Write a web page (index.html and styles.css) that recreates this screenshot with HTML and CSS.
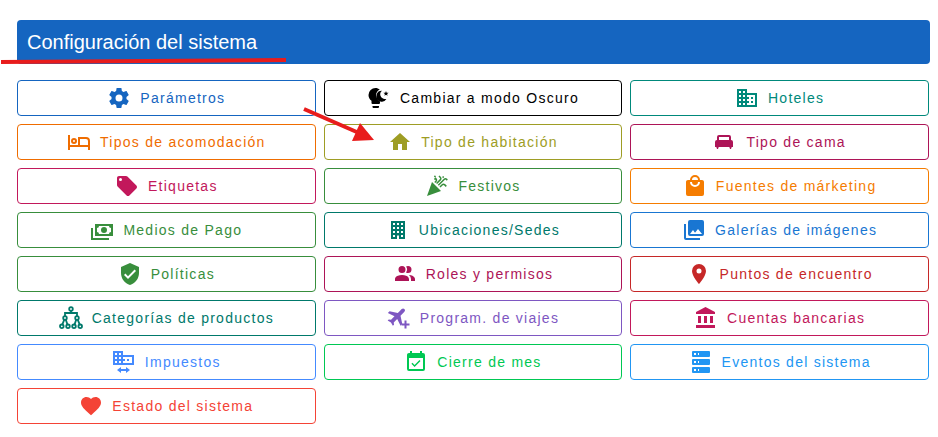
FILE: index.html
```html
<!DOCTYPE html>
<html lang="es">
<head>
    <meta charset="UTF-8">
    <meta name="viewport" content="width=device-width, initial-scale=1.0">
    <title>Configuración del sistema</title>
    <link rel="stylesheet" href="styles.css">
</head>
<body>
    <main class="settings">
        <header class="toolbar">
            <h1>Configuración del sistema</h1>
        </header>

        <div class="options">
            <button type="button" class="btn blue-dark">
                <svg class="icon" viewBox="0 0 24 24"><path d="M12,15.5A3.5,3.5 0 0,1 8.5,12A3.5,3.5 0 0,1 12,8.5A3.5,3.5 0 0,1 15.5,12A3.5,3.5 0 0,1 12,15.5M19.43,12.97C19.47,12.65 19.5,12.33 19.5,12C19.5,11.67 19.47,11.34 19.43,11L21.54,9.37C21.73,9.22 21.78,8.95 21.66,8.73L19.66,5.27C19.54,5.05 19.27,4.96 19.05,5.05L16.56,6.05C16.04,5.66 15.5,5.32 14.87,5.07L14.5,2.42C14.46,2.18 14.25,2 14,2H10C9.75,2 9.54,2.18 9.5,2.42L9.13,5.07C8.5,5.32 7.96,5.66 7.44,6.05L4.95,5.05C4.73,4.96 4.46,5.05 4.34,5.27L2.34,8.73C2.21,8.95 2.27,9.22 2.46,9.37L4.57,11C4.53,11.34 4.5,11.67 4.5,12C4.5,12.33 4.53,12.65 4.57,12.97L2.46,14.63C2.27,14.78 2.21,15.05 2.34,15.27L4.34,18.73C4.46,18.95 4.73,19.03 4.95,18.95L7.44,17.94C7.96,18.34 8.5,18.68 9.13,18.93L9.5,21.58C9.54,21.82 9.75,22 10,22H14C14.25,22 14.46,21.82 14.5,21.58L14.87,18.93C15.5,18.67 16.04,18.34 16.56,17.94L19.05,18.95C19.27,19.03 19.54,18.95 19.66,18.73L21.66,15.27C21.78,15.05 21.73,14.78 21.54,14.63L19.43,12.97Z"/></svg>
                <span>Parámetros</span>
            </button>
            <button type="button" class="btn black">
                <svg class="icon" viewBox="0 0 24 24"><path d="M8.5,2A7.2,7.2 0 0,0 1.5,9C1.5,11.4 2.7,13.5 4.5,14.7V17A1,1 0 0,0 5.5,18H12A1,1 0 0,0 13,17V15.6C10.4,14.4 9,12.2 9,9.6C9,7 10.4,4.8 12.8,3.6C11.6,2.6 10.1,2 8.5,2M5.5,20V21A1,1 0 0,0 6.5,22H11A1,1 0 0,0 12,21V20M15,4.8A5.4,5.4 0 1,0 19.4,13C16.2,13.4 13.2,11.2 13.2,8.3C13.2,6.8 13.9,5.6 15,4.8M19,5L19.7,6.7L21.6,6.8L20.1,8L20.6,9.8L19,8.8L17.4,9.8L17.9,8L16.4,6.8L18.3,6.7Z"/></svg>
                <span>Cambiar a modo Oscuro</span>
            </button>
            <button type="button" class="btn teal">
                <svg class="icon" viewBox="0 0 24 24"><path d="M18,15H16V17H18M18,11H16V13H18M20,19H12V17H14V15H12V13H14V11H12V9H20M10,7H8V5H10M10,11H8V9H10M10,15H8V13H10M10,19H8V17H10M6,7H4V5H6M6,11H4V9H6M6,15H4V13H6M6,19H4V17H6M12,7V3H2V21H22V7H12Z"/></svg>
                <span>Hoteles</span>
            </button>

            <button type="button" class="btn orange-dark">
                <svg class="icon" viewBox="0 0 24 24"><path d="M7,14A3,3 0 0,0 10,11A3,3 0 0,0 7,8A3,3 0 0,0 4,11A3,3 0 0,0 7,14M7,10A1,1 0 0,1 8,11A1,1 0 0,1 7,12A1,1 0 0,1 6,11A1,1 0 0,1 7,10M19,7H11V15H3V5H1V20H3V17H21V20H23V11A4,4 0 0,0 19,7M21,15H13V9H19A2,2 0 0,1 21,11Z"/></svg>
                <span>Tipos de acomodación</span>
            </button>
            <button type="button" class="btn lime">
                <svg class="icon" viewBox="0 0 24 24"><path d="M10,20V14H14V20H19V12H22L12,3L2,12H5V20H10Z"/></svg>
                <span>Tipo de habitación</span>
            </button>
            <button type="button" class="btn pink-dark">
                <svg class="icon" viewBox="0 0 24 24"><path d="M18,10V7A2,2 0 0,0 16,5H6A2,2 0 0,0 4,7V10A2,2 0 0,0 2,12V17H3.3L4,19H5L5.7,17H16.3L17,19H18L18.7,17H20V12A2,2 0 0,0 18,10M16,10H6V7H16Z"/></svg>
                <span>Tipo de cama</span>
            </button>

            <button type="button" class="btn pink">
                <svg class="icon" viewBox="0 0 24 24"><path d="M5.5,7A1.5,1.5 0 0,1 4,5.5A1.5,1.5 0 0,1 5.5,4A1.5,1.5 0 0,1 7,5.5A1.5,1.5 0 0,1 5.5,7M21.41,11.58L12.41,2.58C12.05,2.22 11.55,2 11,2H4C2.89,2 2,2.89 2,4V11C2,11.55 2.22,12.05 2.59,12.41L11.58,21.41C11.95,21.77 12.45,22 13,22C13.55,22 14.05,21.77 14.41,21.41L21.41,14.41C21.78,14.05 22,13.55 22,13C22,12.44 21.77,11.94 21.41,11.58Z"/></svg>
                <span>Etiquetas</span>
            </button>
            <button type="button" class="btn green">
                <svg class="icon" viewBox="0 0 24 24">
                    <path d="M2,22L7,8L16,17Z"/>
                    <path class="line thin" d="M9.4,5.5L10.5,4.4C11.4,5.3 12,6.2 11,7.3L9.8,8.5M14,2L15.2,3.2C16.1,4.1 16.1,5 15.2,5.9L11.6,9.6M13.3,11.3L19.1,5.5C20,4.6 20.8,4.6 21.6,5.4L22.3,6.1M15,13L17,11C18,10 18.9,10 19.8,10.9L21.3,12.4M17.6,3.6L18.7,2.5M9.4,1.9L10.5,3"/>
                </svg>
                <span>Festivos</span>
            </button>
            <button type="button" class="btn orange">
                <svg class="icon" viewBox="0 0 24 24"><path d="M12,13A5,5 0 0,1 7,8H9A3,3 0 0,0 12,11A3,3 0 0,0 15,8H17A5,5 0 0,1 12,13M12,3A3,3 0 0,1 15,6H9A3,3 0 0,1 12,3M19,6H17A5,5 0 0,0 12,1A5,5 0 0,0 7,6H5C3.89,6 3,6.89 3,8V20A2,2 0 0,0 5,22H19A2,2 0 0,0 21,20V8C21,6.89 20.1,6 19,6Z"/></svg>
                <span>Fuentes de márketing</span>
            </button>

            <button type="button" class="btn green">
                <svg class="icon" viewBox="0 0 24 24"><path d="M5,6H23V18H5V6M14,9A3,3 0 0,1 17,12A3,3 0 0,1 14,15A3,3 0 0,1 11,12A3,3 0 0,1 14,9M9,8A2,2 0 0,1 7,10V14A2,2 0 0,1 9,16H19A2,2 0 0,1 21,14V10A2,2 0 0,1 19,8H9M1,10H3V20H19V22H1V10Z"/></svg>
                <span>Medios de Pago</span>
            </button>
            <button type="button" class="btn teal-dark">
                <svg class="icon" viewBox="0 0 24 24"><path d="M5,3V21H11V17.5H13V21H19V3H5M7,5H9V7H7V5M11,5H13V7H11V5M15,5H17V7H15V5M7,9H9V11H7V9M11,9H13V11H11V9M15,9H17V11H15V9M7,13H9V15H7V13M11,13H13V15H11V13M15,13H17V15H15V13M7,17H9V19H7V17M15,17H17V19H15V17Z"/></svg>
                <span>Ubicaciones/Sedes</span>
            </button>
            <button type="button" class="btn blue">
                <svg class="icon" viewBox="0 0 24 24"><path d="M22,16V4A2,2 0 0,0 20,2H8A2,2 0 0,0 6,4V16A2,2 0 0,0 8,18H20A2,2 0 0,0 22,16M11,12L13.03,14.71L16,11L20,16H8M2,6V20A2,2 0 0,0 4,22H18V20H4V6"/></svg>
                <span>Galerías de imágenes</span>
            </button>

            <button type="button" class="btn green">
                <svg class="icon" viewBox="0 0 24 24"><path d="M10,17L6,13L7.41,11.59L10,14.17L16.59,7.58L18,9M12,1L3,5V11C3,16.55 6.84,21.74 12,23C17.16,21.74 21,16.55 21,11V5L12,1Z"/></svg>
                <span>Políticas</span>
            </button>
            <button type="button" class="btn pink-dark">
                <svg class="icon" viewBox="0 0 24 24"><path d="M16,17V19H2V17C2,17 2,13 9,13C16,13 16,17 16,17M12.5,7.5A3.5,3.5 0 1,0 9,11A3.5,3.5 0 0,0 12.5,7.5M15.94,13A5.32,5.32 0 0,1 18,17V19H22V17C22,17 22,13.37 15.94,13M15,4A3.39,3.39 0 0,0 13.07,4.59A5,5 0 0,1 13.07,10.41A3.39,3.39 0 0,0 15,11A3.5,3.5 0 0,0 15,4Z"/></svg>
                <span>Roles y permisos</span>
            </button>
            <button type="button" class="btn red-dark">
                <svg class="icon" viewBox="0 0 24 24"><path d="M12,11.5A2.5,2.5 0 0,1 9.5,9A2.5,2.5 0 0,1 12,6.5A2.5,2.5 0 0,1 14.5,9A2.5,2.5 0 0,1 12,11.5M12,2A7,7 0 0,0 5,9C5,14.25 12,22 12,22C12,22 19,14.25 19,9A7,7 0 0,0 12,2Z"/></svg>
                <span>Puntos de encuentro</span>
            </button>

            <button type="button" class="btn teal-dark">
                <svg class="icon" viewBox="0 0 24 24">
                    <path class="line" d="M12,5V7.5M6,10V7H18V10M5.2,13.8L3.4,18.4M6.8,13.8L8.4,18.4M17.2,13.8L15.6,18.4M18.8,13.8L20.6,18.4"/>
                    <g class="line">
                        <circle cx="12" cy="3" r="1.8"/>
                        <circle cx="6" cy="12" r="1.8"/>
                        <circle cx="18" cy="12" r="1.8"/>
                        <circle cx="2.8" cy="20.3" r="1.8"/>
                        <circle cx="9" cy="20.3" r="1.8"/>
                        <circle cx="15" cy="20.3" r="1.8"/>
                        <circle cx="21.2" cy="20.3" r="1.8"/>
                    </g>
                </svg>
                <span>Categorías de productos</span>
            </button>
            <button type="button" class="btn purple">
                <svg class="icon" viewBox="0 0 24 24">
                    <path transform="translate(10.4 10.8) rotate(45) translate(-12 -12)" d="M20.5,16V13.6L13.4,9V3.5A1.9,1.9 0 0,0 11.5,1.6A1.9,1.9 0 0,0 9.6,3.5V9L2.5,13.6V16L9.6,13.7V18.6L7.8,20V21.6L11.5,20.6L15.2,21.6V20L13.4,18.6V13.7Z"/>
                    <path d="M17.5,14.5H19.5V17.5H22.5V19.5H19.5V22.5H17.5V19.5H14.5V17.5H17.5Z"/>
                </svg>
                <span>Program. de viajes</span>
            </button>
            <button type="button" class="btn pink">
                <svg class="icon" viewBox="0 0 24 24"><path d="M11.5,1L2,6V8H21V6M16,10V17H19V10M2,22H21V19H2M10,10V17H13V10M4,10V17H7V10H4Z"/></svg>
                <span>Cuentas bancarias</span>
            </button>

            <button type="button" class="btn blue-accent">
                <svg class="icon" viewBox="0 0 24 24"><path d="M1,1V15H22V5H11V1M3,3H5V5H3M7,3H9V5H7M3,7H5V9H3M7,7H9V9H7M11,7H20V13H11V11H13V9H11M3,11H5V13H3M7,11H9V13H7M15,9H17V11H15V9M9,17V19H14V17L18,20L14,23V21H9V23L5,20Z"/></svg>
                <span>Impuestos</span>
            </button>
            <button type="button" class="btn green-accent">
                <svg class="icon" viewBox="0 0 24 24"><path d="M19,19H5V8H19M19,3H18V1H16V3H8V1H6V3H5C3.89,3 3,3.9 3,5V19A2,2 0 0,0 5,21H19A2,2 0 0,0 21,19V5A2,2 0 0,0 19,3M16.53,11.06L15.47,10L10.59,14.88L8.47,12.76L7.41,13.82L10.59,17L16.53,11.06Z"/></svg>
                <span>Cierre de mes</span>
            </button>
            <button type="button" class="btn blue-light">
                <svg class="icon" viewBox="0 0 24 24"><path d="M4,1H20A1,1 0 0,1 21,2V6A1,1 0 0,1 20,7H4A1,1 0 0,1 3,6V2A1,1 0 0,1 4,1M4,9H20A1,1 0 0,1 21,10V14A1,1 0 0,1 20,15H4A1,1 0 0,1 3,14V10A1,1 0 0,1 4,9M4,17H20A1,1 0 0,1 21,18V22A1,1 0 0,1 20,23H4A1,1 0 0,1 3,22V18A1,1 0 0,1 4,17M9,5H10V3H9V5M9,13H10V11H9V13M9,21H10V19H9V21M5,3V5H7V3H5M5,11V13H7V11H5M5,19V21H7V19H5Z"/></svg>
                <span>Eventos del sistema</span>
            </button>

            <button type="button" class="btn red">
                <svg class="icon" viewBox="0 0 24 24"><path d="M12,21.35L10.55,20.03C5.4,15.36 2,12.27 2,8.5C2,5.41 4.42,3 7.5,3C9.24,3 10.91,3.81 12,5.08C13.09,3.81 14.76,3 16.5,3C19.58,3 22,5.41 22,8.5C22,12.27 18.6,15.36 13.45,20.03L12,21.35Z"/></svg>
                <span>Estado del sistema</span>
            </button>
        </div>

        <!-- Marcas de ayuda sobre la página -->
        <svg class="marks" width="380" height="150" viewBox="0 0 380 150" aria-hidden="true">
            <path class="mark-line" d="M1,62L286,60"/>
            <path class="mark-line" d="M304,109L359,133"/>
            <path class="mark-head" d="M374,140L360,123L352,141Z"/>
        </svg>
    </main>
</body>
</html>
```

FILE: styles.css
```css
* {
    margin: 0;
    padding: 0;
    box-sizing: border-box;
}

body {
    font-family: "Liberation Sans", Arial, sans-serif;
    background: #fff;
}

.settings {
    position: relative;
    padding: 20px 8px 12px 17px;
}

.toolbar {
    display: flex;
    align-items: center;
    min-height: 44px;
    padding: 0 10px;
    background: #1565c0;
    border-radius: 4px;
    color: #fff;
}

.toolbar h1 {
    font-size: 20px;
    font-weight: 400;
    line-height: 32px;
}

.options {
    display: grid;
    grid-template-columns: repeat(3, 1fr);
    gap: 8px;
    margin-top: 16px;
    padding-right: 1px;
}

.btn {
    display: flex;
    align-items: center;
    justify-content: center;
    gap: 9px;
    height: 36px;
    background: transparent;
    border: 1px solid currentColor;
    border-radius: 4px;
    font-family: inherit;
    font-size: 14px;
    letter-spacing: 0.09em;
    white-space: nowrap;
    cursor: pointer;
}

.btn:hover {
    background: rgba(0, 0, 0, 0.04);
}

.icon {
    flex: none;
    width: 24px;
    height: 24px;
    fill: currentColor;
    fill-rule: evenodd;
}

.icon .line {
    fill: none;
    stroke: currentColor;
    stroke-width: 1.8;
}

.icon .thin {
    stroke-width: 1.5;
}

/* Colores */
.black { color: #000; }
.blue-dark { color: #1565c0; }
.blue { color: #1976d2; }
.blue-light { color: #2196f3; }
.blue-accent { color: #448aff; }
.teal { color: #00897b; }
.teal-dark { color: #00796b; }
.green { color: #388e3c; }
.green-accent { color: #00c853; }
.lime { color: #9e9d24; }
.orange { color: #f57c00; }
.orange-dark { color: #ef6c00; }
.red { color: #f44336; }
.red-dark { color: #c62828; }
.pink { color: #c2185b; }
.pink-dark { color: #ad1457; }
.purple { color: #7e57c2; }

.marks {
    position: absolute;
    top: 0;
    left: 0;
    pointer-events: none;
}

.mark-line {
    stroke: #e81c1c;
    stroke-width: 4;
}

.mark-head {
    fill: #e81c1c;
}

@media (max-width: 700px) {
    .options {
        grid-template-columns: 1fr;
    }

    .marks {
        display: none;
    }
}
```
